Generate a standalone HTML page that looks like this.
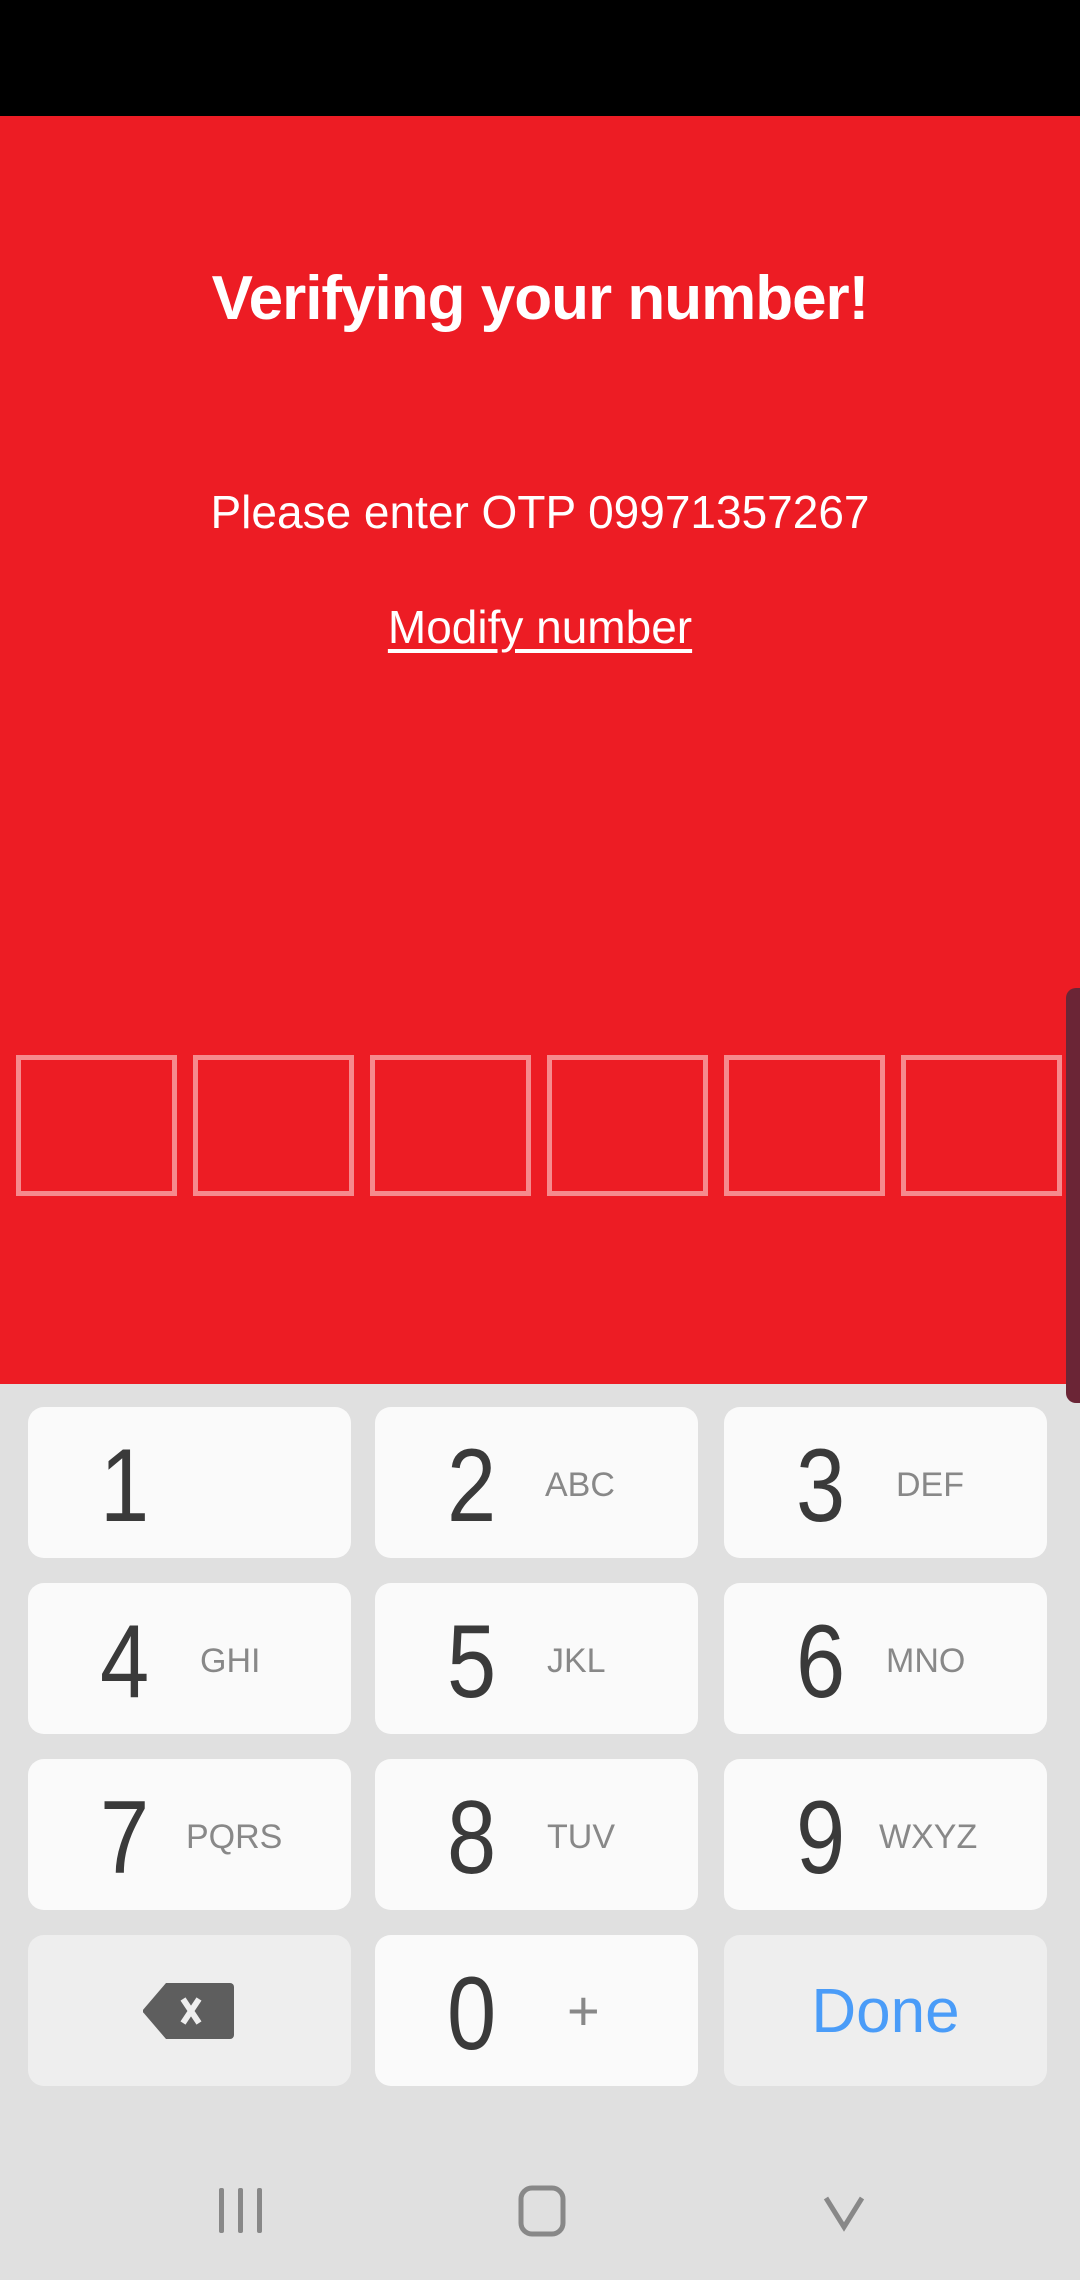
<!DOCTYPE html>
<html><head><meta charset="utf-8"><style>
*{margin:0;padding:0;box-sizing:border-box}
body{width:1080px;height:2280px;position:relative;overflow:hidden;background:#e0e0e0;font-family:"Liberation Sans",sans-serif}
.sb{position:absolute;left:0;top:0;width:1080px;height:116px;background:#000}
.red{position:absolute;left:0;top:116px;width:1080px;height:1268px;background:#ed1c24}
.t{position:absolute;left:0;width:1080px;text-align:center;color:#fff;white-space:nowrap}
.box{position:absolute;top:1055px;width:161px;height:141px;border:5px solid #f68a8d}
.key{position:absolute;width:323px;height:151px;background:#fafafa;border-radius:16px}
.sp{background:#eeeeee}
.d{position:absolute;top:19px;font-size:104px;font-weight:300;color:#3a3a3a;line-height:120px;transform:scaleX(0.85);transform-origin:left}
.l{position:absolute;top:58px;font-size:34px;color:#888;line-height:40px}
.handle{position:absolute;left:1066px;top:988px;width:20px;height:415px;background:#6b2536;border-radius:10px 0 0 10px}
</style></head><body>
<div class="sb"></div>
<div class="red"></div>
<div class="t" style="top:263px;font-size:62px;font-weight:bold;letter-spacing:-1px">Verifying your number!</div>
<div class="t" style="top:485px;font-size:46px">Please enter OTP 09971357267</div>
<div class="t" style="top:600px;font-size:46px;text-decoration:underline;text-underline-offset:6px">Modify number</div>
<div class="box" style="left:16px"></div>
<div class="box" style="left:193px"></div>
<div class="box" style="left:370px"></div>
<div class="box" style="left:547px"></div>
<div class="box" style="left:724px"></div>
<div class="box" style="left:901px"></div>
<div class="handle"></div>

<div class="key" style="left:28px;top:1407px"><div class="d" style="left:72px">1</div></div>
<div class="key" style="left:375px;top:1407px"><div class="d" style="left:72px">2</div><div class="l" style="left:170px">ABC</div></div>
<div class="key" style="left:724px;top:1407px"><div class="d" style="left:72px">3</div><div class="l" style="left:172px">DEF</div></div>

<div class="key" style="left:28px;top:1583px"><div class="d" style="left:72px">4</div><div class="l" style="left:172px">GHI</div></div>
<div class="key" style="left:375px;top:1583px"><div class="d" style="left:72px">5</div><div class="l" style="left:172px">JKL</div></div>
<div class="key" style="left:724px;top:1583px"><div class="d" style="left:72px">6</div><div class="l" style="left:162px">MNO</div></div>

<div class="key" style="left:28px;top:1759px"><div class="d" style="left:72px">7</div><div class="l" style="left:158px">PQRS</div></div>
<div class="key" style="left:375px;top:1759px"><div class="d" style="left:72px">8</div><div class="l" style="left:172px">TUV</div></div>
<div class="key" style="left:724px;top:1759px"><div class="d" style="left:72px">9</div><div class="l" style="left:155px">WXYZ</div></div>

<div class="key sp" style="left:28px;top:1935px">
<svg style="position:absolute;left:115px;top:48px" width="92" height="56" viewBox="0 0 92 56"><path d="M24 0H88a4 4 0 0 1 4 4V52a4 4 0 0 1-4 4H24L0 28Z" fill="#5e5e5e" transform="translate(-1 0)"/><path d="M40 16L56 40M56 16L40 40" stroke="#eee" stroke-width="6"/></svg>
</div>
<div class="key" style="left:375px;top:1935px"><div class="d" style="left:72px">0</div><div class="l" style="left:192px;top:56px;font-size:56px">+</div></div>
<div class="key sp" style="left:724px;top:1935px"><div style="position:absolute;left:0;width:323px;text-align:center;top:42px;font-size:62px;color:#4a9cf8;line-height:70px">Done</div></div>

<svg style="position:absolute;left:210px;top:2182px" width="60" height="60"><g fill="#888"><rect x="9" y="6" width="5" height="45" rx="2"/><rect x="28" y="6" width="5" height="45" rx="2"/><rect x="47" y="6" width="5" height="45" rx="2"/></g></svg>
<svg style="position:absolute;left:515px;top:2182px" width="56" height="60"><rect x="6" y="6" width="42" height="46" rx="11" fill="none" stroke="#888" stroke-width="5"/></svg>
<svg style="position:absolute;left:822px;top:2192px" width="56" height="40"><path d="M4 6L22 35L40 6" fill="none" stroke="#888" stroke-width="5"/></svg>
</body></html>
